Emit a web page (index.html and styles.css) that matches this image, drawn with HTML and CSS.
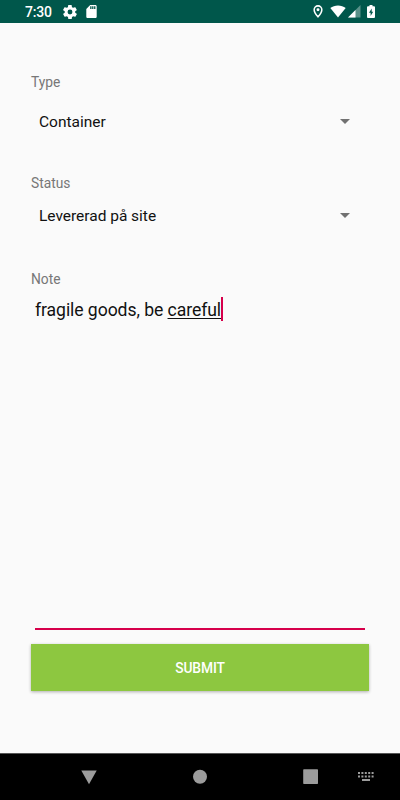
FILE: index.html
```html
<!DOCTYPE html>
<html lang="sv">
<head>
  <meta charset="UTF-8" />
  <meta name="viewport" content="width=device-width, initial-scale=1.0"/>
  <title>Container</title>
  <link rel="stylesheet" href="styles.css">
</head>
<body>
  <header class="status-bar">
    <span class="clock">7:30</span>
    <svg class="icon-gear" width="14" height="14" viewBox="2 2 20 20"><path d="M19.4 13a7.500 7.500 0 0 0 0-2l2.100-1.600a.5.5 0 0 0 .1-.6l-2-3.500a.5.5 0 0 0-.6-.2l-2.500 1a7.300 7.300 0 0 0-1.700-1l-.4-2.600a.5.5 0 0 0-.5-.4h-4a.5.5 0 0 0-.5.4L9 5.100a7.700 7.700 0 0 0-1.700 1l-2.500-1a.5.5 0 0 0-.6.2l-2 3.500a.5.5 0 0 0 .1.6L4.500 11a8 8 0 0 0 0 2l-2.100 1.600a.5.5 0 0 0-.1.6l2 3.500c.1.2.4.3.6.2l2.500-1a7.300 7.300 0 0 0 1.700 1l.4 2.600c0 .2.2.4.5.4h4c.2 0 .5-.2.5-.4l.4-2.600a7.700 7.700 0 0 0 1.700-1l2.500 1c.2.1.5 0 .6-.2l2-3.500a.5.5 0 0 0-.1-.6zM12 15.500a3.500 3.500 0 1 1 0-7 3.500 3.500 0 0 1 0 7z"/></svg>
    <svg class="icon-sd" width="11" height="13" viewBox="4 2 16 20"><path d="M18 2h-8L4 8v12c0 1.100.9 2 2 2h12c1.100 0 2-.9 2-2V4c0-1.100-.9-2-2-2zm-6 6h-2V4h2zm3 0h-2V4h2zm3 0h-2V4h2z"/></svg>
    <div class="system-icons">
      <svg class="icon-pin" width="10" height="13" viewBox="4 1 16 22"><path d="M12 2.500a6.500 6.500 0 0 0-6.500 6.500c0 4.800 6.500 12 6.500 12s6.500-7.200 6.500-12A6.500 6.500 0 0 0 12 2.500z"/><circle cx="12" cy="9" r="2.500"/></svg>
      <svg class="icon-wifi" width="16" height="13" viewBox="0 0 16 13"><path d="M8 12.500.3 3C4.500-.4 11.500-.4 15.700 3z"/></svg>
      <svg class="icon-signal" width="13" height="13" viewBox="0 0 13 13"><path class="dim" d="M12.500 0v12.500H0z"/><path d="M7.500 5v7.500H0z"/></svg>
      <svg class="icon-battery" width="8" height="13" viewBox="0 0 8 13"><path d="M2.500 0h3v1.300H7q1 0 1 1V12q0 1-1 1H1q-1 0-1-1V2.300q0-1 1-1h1.500z"/><path class="bolt" d="M4.700 3.500 2 7.700h1.600V11L6.200 6.700H4.700z"/></svg>
    </div>
  </header>

  <main class="form">
    <label class="label">Type</label>
    <div class="spinner type">
      <span>Container</span>
      <i class="caret"></i>
    </div>

    <label class="label">Status</label>
    <div class="spinner status">
      <span>Levererad på site</span>
      <i class="caret"></i>
    </div>

    <label class="label">Note</label>
    <div class="note">fragile goods, be <span class="composing">careful</span><span class="cursor"></span></div>

    <button class="submit">SUBMIT</button>
  </main>

  <nav class="nav-bar">
    <svg width="16" height="16" viewBox="0 0 16 16"><path d="M.3 1.500h15.400L8 15.200z"/></svg>
    <svg width="16" height="16" viewBox="0 0 16 16"><circle cx="8" cy="7.700" r="7"/></svg>
    <svg width="16" height="16" viewBox="0 0 16 16"><rect x=".2" y=".2" width="14.800" height="14.800" rx=".7"/></svg>
    <svg class="keyboard" width="16" height="10" viewBox="0 0 16 10"><path d="M0 0h2v2H0zm3.400 0h2v2h-2zm3.400 0h2v2h-2zm3.400 0h2v2h-2zm3.400 0h2v2h-2zM0 3.600h2v2H0zm3.400 0h2v2h-2zm3.400 0h2v2h-2zm3.400 0h2v2h-2zm3.400 0h2v2h-2zM4 7h8v2H4z"/></svg>
  </nav>
</body>
</html>
```
FILE: styles.css
```css
* {
  box-sizing: border-box;
}
body {
  margin: 0;
  height: 800px;
  display: flex;
  flex-direction: column;
  overflow: hidden;
  background-color: #fafafa;
  font-family: Roboto, sans-serif;
}
.status-bar {
  display: flex;
  align-items: center;
  height: 23px;
  padding: 0 25px;
  background-color: #00574b;
  color: #fff;
}
.status-bar svg {
  fill: #fff;
}
.clock {
  width: 38px;
  font-size: 14px;
  font-weight: 500;
  line-height: 24px;
  letter-spacing: -0.2px;
}
.icon-sd {
  margin-left: 9px;
}
.system-icons {
  display: flex;
  align-items: center;
  margin-left: auto;
}
.status-bar .icon-pin {
  fill: none;
  stroke: #fff;
  stroke-width: 2.600;
}
.icon-pin circle {
  fill: #fff;
  stroke: none;
}
.icon-wifi {
  margin-left: 7px;
}
.icon-signal {
  margin-left: 2px;
}
.dim {
  opacity: 0.35;
}
.icon-battery {
  margin-left: 6px;
}
.bolt {
  fill: #00574b;
}
.form {
  display: flex;
  flex-direction: column;
  flex: 1;
  padding: 49px 31px 0;
}
.label {
  height: 20px;
  line-height: 20px;
  font-size: 13.800px;
  color: #777;
}
.spinner {
  display: flex;
  align-items: center;
  justify-content: space-between;
  height: 40px;
  padding: 0 19px 0 8px;
  font-size: 15.500px;
  letter-spacing: -0.02px;
  line-height: 18px;
  color: #111;
}
.type {
  margin: 10px 0 31px;
}
.status {
  margin: 3px 0 33px;
}
.caret {
  border: 5px solid transparent;
  border-top-color: #717171;
  border-bottom: 0;
  margin-bottom: 1px;
}
.note {
  height: 341px;
  margin: 0 4px;
  padding-top: 8px;
  border-bottom: 2px solid #d6004b;
  font-size: 17.600px;
  letter-spacing: -0.07px;
  line-height: 26px;
  color: #111;
}
.composing {
  text-decoration: underline;
  text-decoration-thickness: 1px;
  text-underline-offset: 2px;
  text-decoration-skip-ink: none;
}
.cursor {
  display: inline-block;
  width: 2px;
  height: 24px;
  margin-bottom: -5px;
  vertical-align: baseline;
  background-color: #d6004b;
}
.submit {
  height: 47px;
  margin-top: 14px;
  padding: 1px 0 0;
  border: 0;
  background-color: #8dc740;
  box-shadow: 0 1px 3px rgba(0, 0, 0, 0.3);
  font-family: inherit;
  font-size: 13.800px;
  letter-spacing: -0.1px;
  font-weight: 500;
  color: #fff;
}
.nav-bar {
  display: flex;
  align-items: center;
  height: 47px;
  padding-left: 81px;
  gap: 95px;
  border-top: 1px solid #555;
  background-color: #000;
}
.nav-bar svg {
  fill: #9c9c9c;
}
.keyboard {
  margin-left: -56px;
}
```
